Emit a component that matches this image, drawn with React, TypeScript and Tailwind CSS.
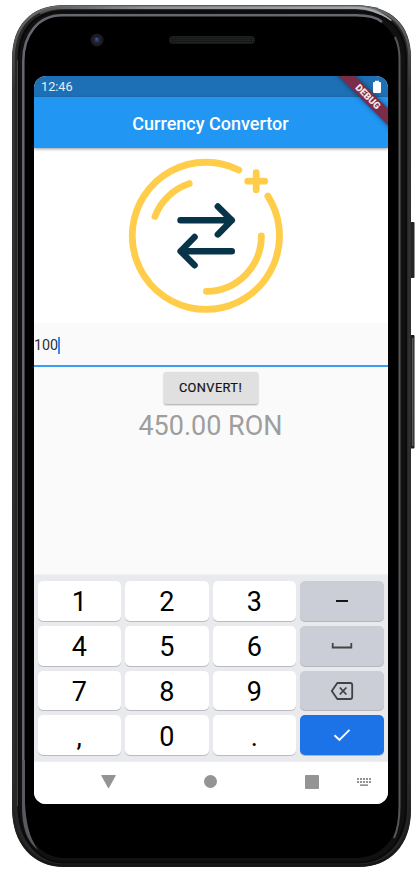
import React from "react";

function DeviceFrame() {
  return (
    <svg className="absolute inset-0" width="419" height="875" viewBox="0 0 419 875" fill="none">
      <defs>
        <linearGradient id="rim" x1="0" y1="0" x2="0" y2="1">
          <stop offset="0" stopColor="#6a6c6f" />
          <stop offset="0.1" stopColor="#343434" />
          <stop offset="0.9" stopColor="#2c2c2c" />
          <stop offset="1" stopColor="#151515" />
        </linearGradient>
        <linearGradient id="topEdge" x1="0" y1="0" x2="1" y2="0">
          <stop offset="0" stopColor="#555" />
          <stop offset="0.3" stopColor="#8e9092" />
          <stop offset="1" stopColor="#a5a9ab" />
        </linearGradient>
        <pattern id="mesh" width="2" height="2" patternUnits="userSpaceOnUse">
          <rect width="2" height="2" fill="#181a1a" />
          <rect width="1" height="1" fill="#232625" />
        </pattern>
      </defs>
      <rect x="409" y="222" width="5.5" height="56" rx="1" fill="#242424" />
      <rect x="409" y="335" width="5.5" height="113.5" rx="1" fill="#1c1c1c" />
      <path d="M412.7 338V446" stroke="#555759" strokeWidth="1.6" />
      <path d="M62 5H357C391 6 411 24 411 58V810C411 846 389 867 359 867H64C33 867 12 844 12 808V59C12 25 31 6 62 5Z" fill="#262626" />
      <path d="M62 6.5H357C389 7.5 409.5 25 409.5 58V810C409.5 845 388 865.5 359 865.5H64C34 865.5 13.5 843 13.5 808V59C13.5 26 32 7.5 62 6.5Z" stroke="url(#rim)" strokeWidth="2.5" />
      <path d="M40 13C48 8.5 55 7.7 65 7.7H356C371 8 382 13 391 21" stroke="url(#topEdge)" strokeWidth="2.4" />
      <path d="M62 11.2H356C388 12 406 29 406 60V808C406 840 386 862.5 358 862.5H64C38 862.5 18.5 839 18.5 806V60C18.5 29 35 12 62 11.2Z" fill="#111" stroke="#0a0a0a" strokeWidth="2" />
      <path d="M17.5 60V806" stroke="#444" strokeWidth="1" />
      <path d="M404.2 60V806" stroke="#101010" strokeWidth="2" />
      <path d="M62 15.5H356C382 15.5 400 35 400 61V806C400 838 381 858 356 858H64C41 858 23 837 23 806V60C23 34 38 16 62 15.5Z" fill="#000" />
      <path d="M23.3 806V61C23.3 35 38 15.3 62 15.3H356C369 15.3 378 18.5 382 22" stroke="#66686f" strokeWidth="2.5" />
      <path d="M395 37C398 43 399.5 49 399.5 59V806C399.5 818 398 829 394 838" stroke="#55565a" strokeWidth="2" />
      <path d="M22 760V806C22 828 27 841 38 850C29 837 26 822 25 803V760Z" fill="#585a60" />
      <rect x="169" y="36" width="86" height="8" rx="4" fill="url(#mesh)" />
      <circle cx="97" cy="40" r="6.5" fill="#1b1b1f" />
      <circle cx="97" cy="40" r="4" fill="#1c2238" />
      <circle cx="97" cy="40" r="2.2" fill="#303c68" />
      <circle cx="96.3" cy="38.8" r="0.8" fill="#66719a" />
    </svg>
  );
}

function ExchangeLogo() {
  return (
    <svg className="block" width="160" height="175" viewBox="126 148 160 175" fill="none" strokeLinecap="round" strokeLinejoin="round">
      <g stroke="#ffcd4a" strokeWidth="6.8">
        <path d="M238.8 170A73.6 73.6 0 1 0 267.9 196.2" />
        <path d="M189.2 183.6A55.4 55.4 0 0 0 155 216.4" />
        <path d="M261.4 236A55.2 55.2 0 0 1 206.4 291.3" />
        <path d="M256.2 172.7V189.7M247.7 181.2H264.7" />
      </g>
      <g stroke="#083449" strokeWidth="6.4">
        <path d="M180.5 220.3H231.7M217.8 206.4L231.8 220.3L217.8 234.4" />
        <path d="M231.8 251.2H180.8M194.6 237L180.6 251.2L194.6 265.3" />
      </g>
    </svg>
  );
}

function SpaceIcon() {
  return (
    <svg width="22" height="8" viewBox="0 0 22 8" fill="none">
      <path d="M1.7 1V5.5H20.3V1" stroke="#444549" strokeWidth="1.8" />
    </svg>
  );
}

function BackspaceIcon() {
  return (
    <svg className="mt-px" width="24" height="20" viewBox="0 0 24 20" fill="none" stroke="#404145" strokeWidth="1.8">
      <path d="M7.3 2H20.2Q22.2 2 22.2 4V16Q22.2 18 20.2 18H7.3L1.8 10Z" strokeLinejoin="round" />
      <path d="M9.8 6.5L16.4 13.5M16.4 6.5L9.8 13.5" />
    </svg>
  );
}

function CheckIcon() {
  return (
    <svg width="18" height="14" viewBox="0 0 18 14" fill="none">
      <path d="M1.5 7.2L6.4 12L16.5 1.9" stroke="#fff" strokeWidth="1.9" />
    </svg>
  );
}

function KeyboardIcon() {
  return (
    <svg className="block" width="16" height="10" viewBox="0 0 16 10" fill="#949494">
      {[1, 4, 7, 10, 13].map((x) => (
        <React.Fragment key={x}>
          <rect x={x} y="1" width="2" height="2" />
          <rect x={x} y="4" width="2" height="2" />
        </React.Fragment>
      ))}
      <rect x="4" y="7.3" width="8" height="1.7" />
    </svg>
  );
}

const digitRows = [
  ["1", "2", "3"],
  ["4", "5", "6"],
  ["7", "8", "9"],
  [",", "0", "."],
];

const actions = [
  <span key="minus" className="mt-px h-[2px] w-[12px] bg-[#161616]" />,
  <SpaceIcon key="space" />,
  <BackspaceIcon key="backspace" />,
  <CheckIcon key="done" />,
];

function Keypad() {
  return (
    <div className="grid h-[186px] grid-cols-4 grid-rows-4 gap-x-[4px] gap-y-[5px] bg-[#e8eaed] pt-[6px] pr-[4.5px] pb-[6px] pl-[3.5px] shadow-[0_-1px_2px_rgba(0,0,0,0.04)]">
      {digitRows.map((row, i) => (
        <React.Fragment key={i}>
          {row.map((digit) => (
            <button key={digit} className="flex items-center justify-center rounded-[5px] bg-white pt-[4px] text-[27px] leading-none text-black shadow-[0_1px_0.5px_#b9bbbf]">
              {digit}
            </button>
          ))}
          <button className={`flex items-center justify-center rounded-[5px] shadow-[0_1px_0.5px_#b4b6bb] ${i === 3 ? "bg-[#1c73e8]" : "bg-[#cbced6]"}`}>
            {actions[i]}
          </button>
        </React.Fragment>
      ))}
    </div>
  );
}

export default function App() {
  return (
    <div className="relative h-[875px] w-[419px] overflow-hidden bg-white pt-[76px] pl-[34px] font-['Roboto','Liberation_Sans',sans-serif]">
      <DeviceFrame />
      <div className="relative flex h-[728px] w-[354px] flex-col overflow-hidden rounded-[12px] bg-[#fafafa]">
        <div className="flex h-[21px] items-center justify-between bg-[#1e70b6] pr-[7px] pl-[7px] text-[12.7px] text-[#e4edf5]">
          <span className="pt-px">12:46</span>
          <svg className="relative z-20" width="8" height="13" viewBox="0 0 8 13" fill="#fff">
            <path d="M2 2V0.8H6V2H7Q8 2 8 3V12Q8 13 7 13H1Q0 13 0 12V3Q0 2 1 2Z" />
          </svg>
        </div>
        <header className="z-10 flex h-[50.5px] items-center justify-center bg-[#2196f3] pt-[2px] pr-[1px] text-[18px] font-medium text-white shadow-[0_1px_3px_rgba(0,0,0,0.4)]">
          Currency Convertor
        </header>
        <div className="flex h-[175px] justify-center bg-white pr-[10px]">
          <ExchangeLogo />
        </div>
        <div className="flex h-[44.5px] shrink-0 items-center border-b-2 border-[#389ff5] pt-[3px] text-[14.3px] text-[#303030]">
          <span>100</span>
          <span className="h-[17px] w-[1.7px] bg-[#4285f4]" />
        </div>
        <div className="flex flex-col items-center pt-[5px] pr-px">
          <button className="h-[32px] w-[94px] rounded-[2px] bg-[#e0e0e0] text-[12.8px] font-normal tracking-[0.4px] text-[#111] shadow-[0_1px_2px_rgba(0,0,0,0.35)] [-webkit-text-stroke:0.2px_#202020]">
            CONVERT!
          </button>
          <p className="mt-[5px] text-[27px] leading-[34px] text-[#9e9e9e]">450.00 RON</p>
        </div>
        <div className="flex-1" />
        <Keypad />
        <nav className="h-[43px] border-t border-[#eeeeee] bg-white">
          <div className="flex h-[39px] items-center pl-[67px]">
            <svg width="15" height="14" viewBox="0 0 15 14" fill="#949494">
              <path d="M0.7 0H14.3Q15 0 14.7 0.7L8.2 12.5Q7.5 13.5 6.8 12.5L0.3 0.7Q0 0 0.7 0Z" />
            </svg>
            <span className="ml-[88px] h-[13px] w-[13px] rounded-full bg-[#949494]" />
            <span className="ml-[88px] h-[14px] w-[14px] rounded-[1px] bg-[#949494]" />
            <span className="ml-[37px]"><KeyboardIcon /></span>
          </div>
        </nav>
        <div className="absolute top-[14.5px] left-[280.5px] z-10 flex h-[11.5px] w-[106px] rotate-45 items-center justify-center bg-[#7b2c48] text-[9.6px] leading-none font-black text-[#f3e8eb] shadow-[0_0_5px_rgba(0,0,0,0.45)]">
          DEBUG
        </div>
      </div>
    </div>
  );
}
